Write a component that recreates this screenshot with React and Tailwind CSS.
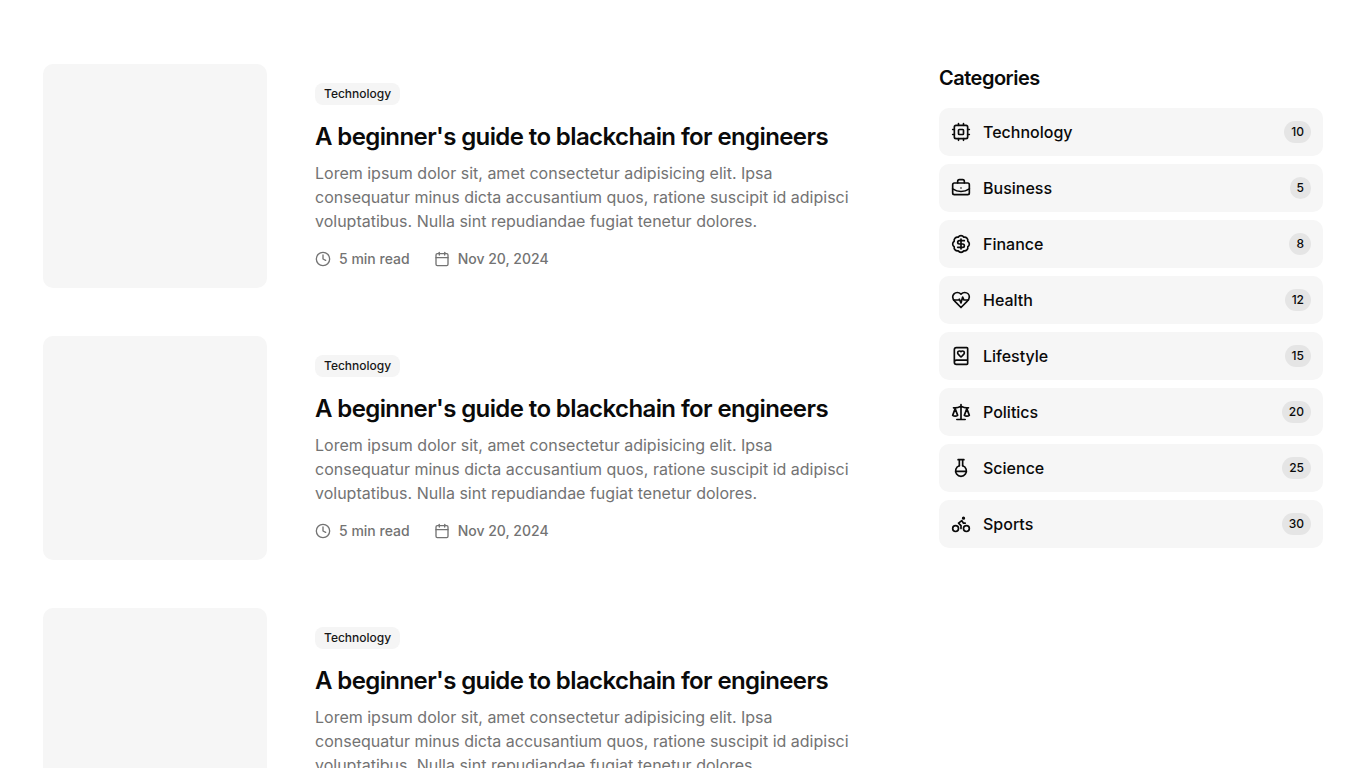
import React from "react";
import { BriefcaseBusiness, BadgeDollarSign, BookHeart, Bike, Clock, Calendar } from "lucide-react";

function Glyph({ className, children }) {
  return (
    <svg className={className} viewBox="0 0 24 24" fill="none" stroke="currentColor" strokeWidth="2" strokeLinecap="round" strokeLinejoin="round" aria-hidden="true">
      {children}
    </svg>
  );
}

function Cpu({ className }) {
  return (
    <Glyph className={className}>
      <rect width="16" height="16" x="4" y="4" rx="2" />
      <rect width="6" height="6" x="9" y="9" rx="1" />
      <path d="M15 2v2M15 20v2M2 15h2M2 9h2M20 15h2M20 9h2M9 2v2M9 20v2" />
    </Glyph>
  );
}

function HeartPulse({ className }) {
  return (
    <Glyph className={className}>
      <path d="M19 14c1.49-1.46 3-3.21 3-5.5A5.5 5.5 0 0 0 16.5 3c-1.76 0-3 .5-4.5 2-1.5-1.5-2.74-2-4.5-2A5.5 5.5 0 0 0 2 8.5c0 2.3 1.5 4.05 3 5.5l7 7Z" />
      <path d="M3.22 12H9.5l.5-1 2 4.5 2-7 1.5 3.5h5.27" />
    </Glyph>
  );
}

function Scale({ className }) {
  return (
    <Glyph className={className}>
      <path d="m16 16 3-8 3 8c-.87.65-1.92 1-3 1s-2.13-.35-3-1Z" />
      <path d="m2 16 3-8 3 8c-.87.65-1.92 1-3 1s-2.13-.35-3-1Z" />
      <path d="M7 21h10M12 3v18M3 7h2c2 0 5-1 7-2 2 1 5 2 7 2h2" />
    </Glyph>
  );
}

function Flask({ className }) {
  return (
    <Glyph className={className}>
      <path d="M10 2v7.31M14 9.3V1.99M8.5 2h7" />
      <path d="M14 9.3a6.5 6.5 0 1 1-4 0M5.52 16h12.96" />
    </Glyph>
  );
}

const categories = [
  { name: "Technology", total: 10, icon: Cpu },
  { name: "Business", total: 5, icon: BriefcaseBusiness },
  { name: "Finance", total: 8, icon: BadgeDollarSign },
  { name: "Health", total: 12, icon: HeartPulse },
  { name: "Lifestyle", total: 15, icon: BookHeart },
  { name: "Politics", total: 20, icon: Scale },
  { name: "Science", total: 25, icon: Flask },
  { name: "Sports", total: 30, icon: Bike },
];

function Post() {
  return (
    <article className="flex items-center gap-12">
      <div className="size-56 shrink-0 rounded-[10px] bg-[#f6f6f6]" />
      <div className="min-w-0 pr-4 pb-1">
        <span className="inline-flex items-center rounded-lg bg-[#f5f5f5] px-[9px] py-[3px] text-xs font-medium text-[#171717]">
          Technology
        </span>
        <h3 className="mt-4 text-2xl font-semibold tracking-tight">
          A beginner's guide to blackchain for engineers
        </h3>
        <p className="mt-2 text-base text-[#737373]">
          Lorem ipsum dolor sit, amet consectetur adipisicing elit. Ipsa
          consequatur minus dicta accusantium quos, ratione suscipit id adipisci
          voluptatibus. Nulla sint repudiandae fugiat tenetur dolores.
        </p>
        <div className="mt-4 flex items-center gap-6 text-sm font-medium text-[#737373]">
          <div className="flex items-center gap-2">
            <Clock className="size-4" /> 5 min read
          </div>
          <div className="flex items-center gap-2">
            <Calendar className="size-4" /> Nov 20, 2024
          </div>
        </div>
      </div>
    </article>
  );
}

export default function App() {
  return (
    <div className="h-screen overflow-hidden bg-white font-['Inter',sans-serif] text-[#0a0a0a] antialiased">
      <main className="mx-auto flex max-w-7xl items-start gap-16 py-16">
        <div className="min-w-0 flex-1 space-y-12">
          <Post />
          <Post />
          <Post />
        </div>
        <aside className="w-96 shrink-0">
          <h3 className="text-xl font-semibold tracking-tight">Categories</h3>
          <ul className="mt-4 space-y-2">
            {categories.map(({ name, total, icon: Icon }) => (
              <li key={name}>
                <a href="#" className="flex h-12 items-center justify-between rounded-[10px] bg-[#f6f6f6] px-3">
                  <span className="flex items-center gap-3 font-medium">
                    <Icon className="size-5" /> {name}
                  </span>
                  <span className="rounded-full bg-[#e5e5e5] px-[7px] py-[3px] text-xs font-medium">
                    {total}
                  </span>
                </a>
              </li>
            ))}
          </ul>
        </aside>
      </main>
    </div>
  );
}
